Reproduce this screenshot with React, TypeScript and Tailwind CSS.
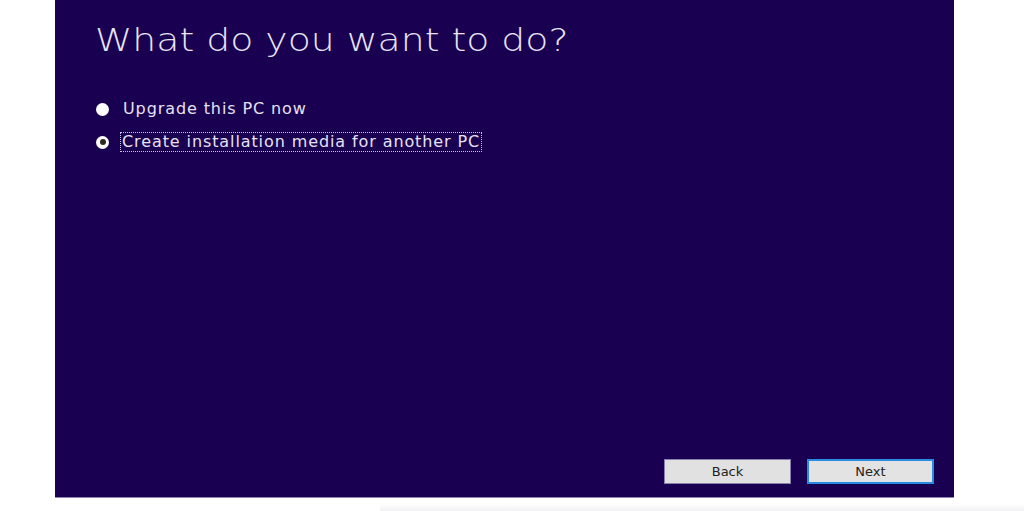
import { useState } from 'react'

const OPTIONS = [
  { id: 'upgrade', label: 'Upgrade this PC now' },
  { id: 'media', label: 'Create installation media for another PC' },
]

function Radio({ checked }: { checked: boolean }) {
  return (
    <span className="flex h-[13px] w-[13px] items-center justify-center rounded-full bg-white">
      {checked && <span className="h-[6px] w-[6px] rounded-full bg-[#2e2a22]" />}
    </span>
  )
}

export default function App() {
  const [choice, setChoice] = useState('media')

  return (
    <div
      className="relative h-[511px] w-[1024px] overflow-hidden bg-white"
      style={{ fontFamily: '"DejaVu Sans", "Open Sans", sans-serif' }}
    >
      <div className="ml-[55px] flex h-[498px] w-[899px] flex-col border-b border-[#8f86b0] bg-[#190050] pl-[40px] pr-[20px]">
        <h1 className="mt-[20px] origin-left scale-x-[1.18] text-[32px] font-extralight leading-[40px] text-[#e8e4f4]">
          What do you want to do?
        </h1>

        <div className="mt-[39px] flex flex-col gap-[13px]">
          {OPTIONS.map((o) => {
            const checked = choice === o.id
            return (
              <label
                key={o.id}
                onClick={() => setChoice(o.id)}
                className="flex cursor-pointer items-center gap-[13px] text-[16px] leading-[18px] tracking-[0.9px] text-[#e6e2f2]"
              >
                <span className="ml-px">
                  <Radio checked={checked} />
                </span>
                <span
                  className={
                    checked
                      ? 'ml-[-2px] border border-dotted border-[#c9c3e0] px-px'
                      : 'border border-transparent'
                  }
                >
                  {o.label}
                </span>
              </label>
            )
          })}
        </div>

        <div className="mt-auto mb-[13px] flex justify-end gap-[16px]">
          <button className="h-[25px] w-[127px] border border-[#8a7fae] bg-[#e1e1e1] text-[13px] text-[#222]">
            Back
          </button>
          <button className="h-[25px] w-[127px] border-2 border-[#2a8ce0] bg-[#e3e3e3] text-[13px] text-[#222]">
            Next
          </button>
        </div>
      </div>
      <div className="absolute bottom-0 left-[380px] right-0 h-[7px] bg-gradient-to-b from-white to-[#f1f0f4]" />
    </div>
  )
}
